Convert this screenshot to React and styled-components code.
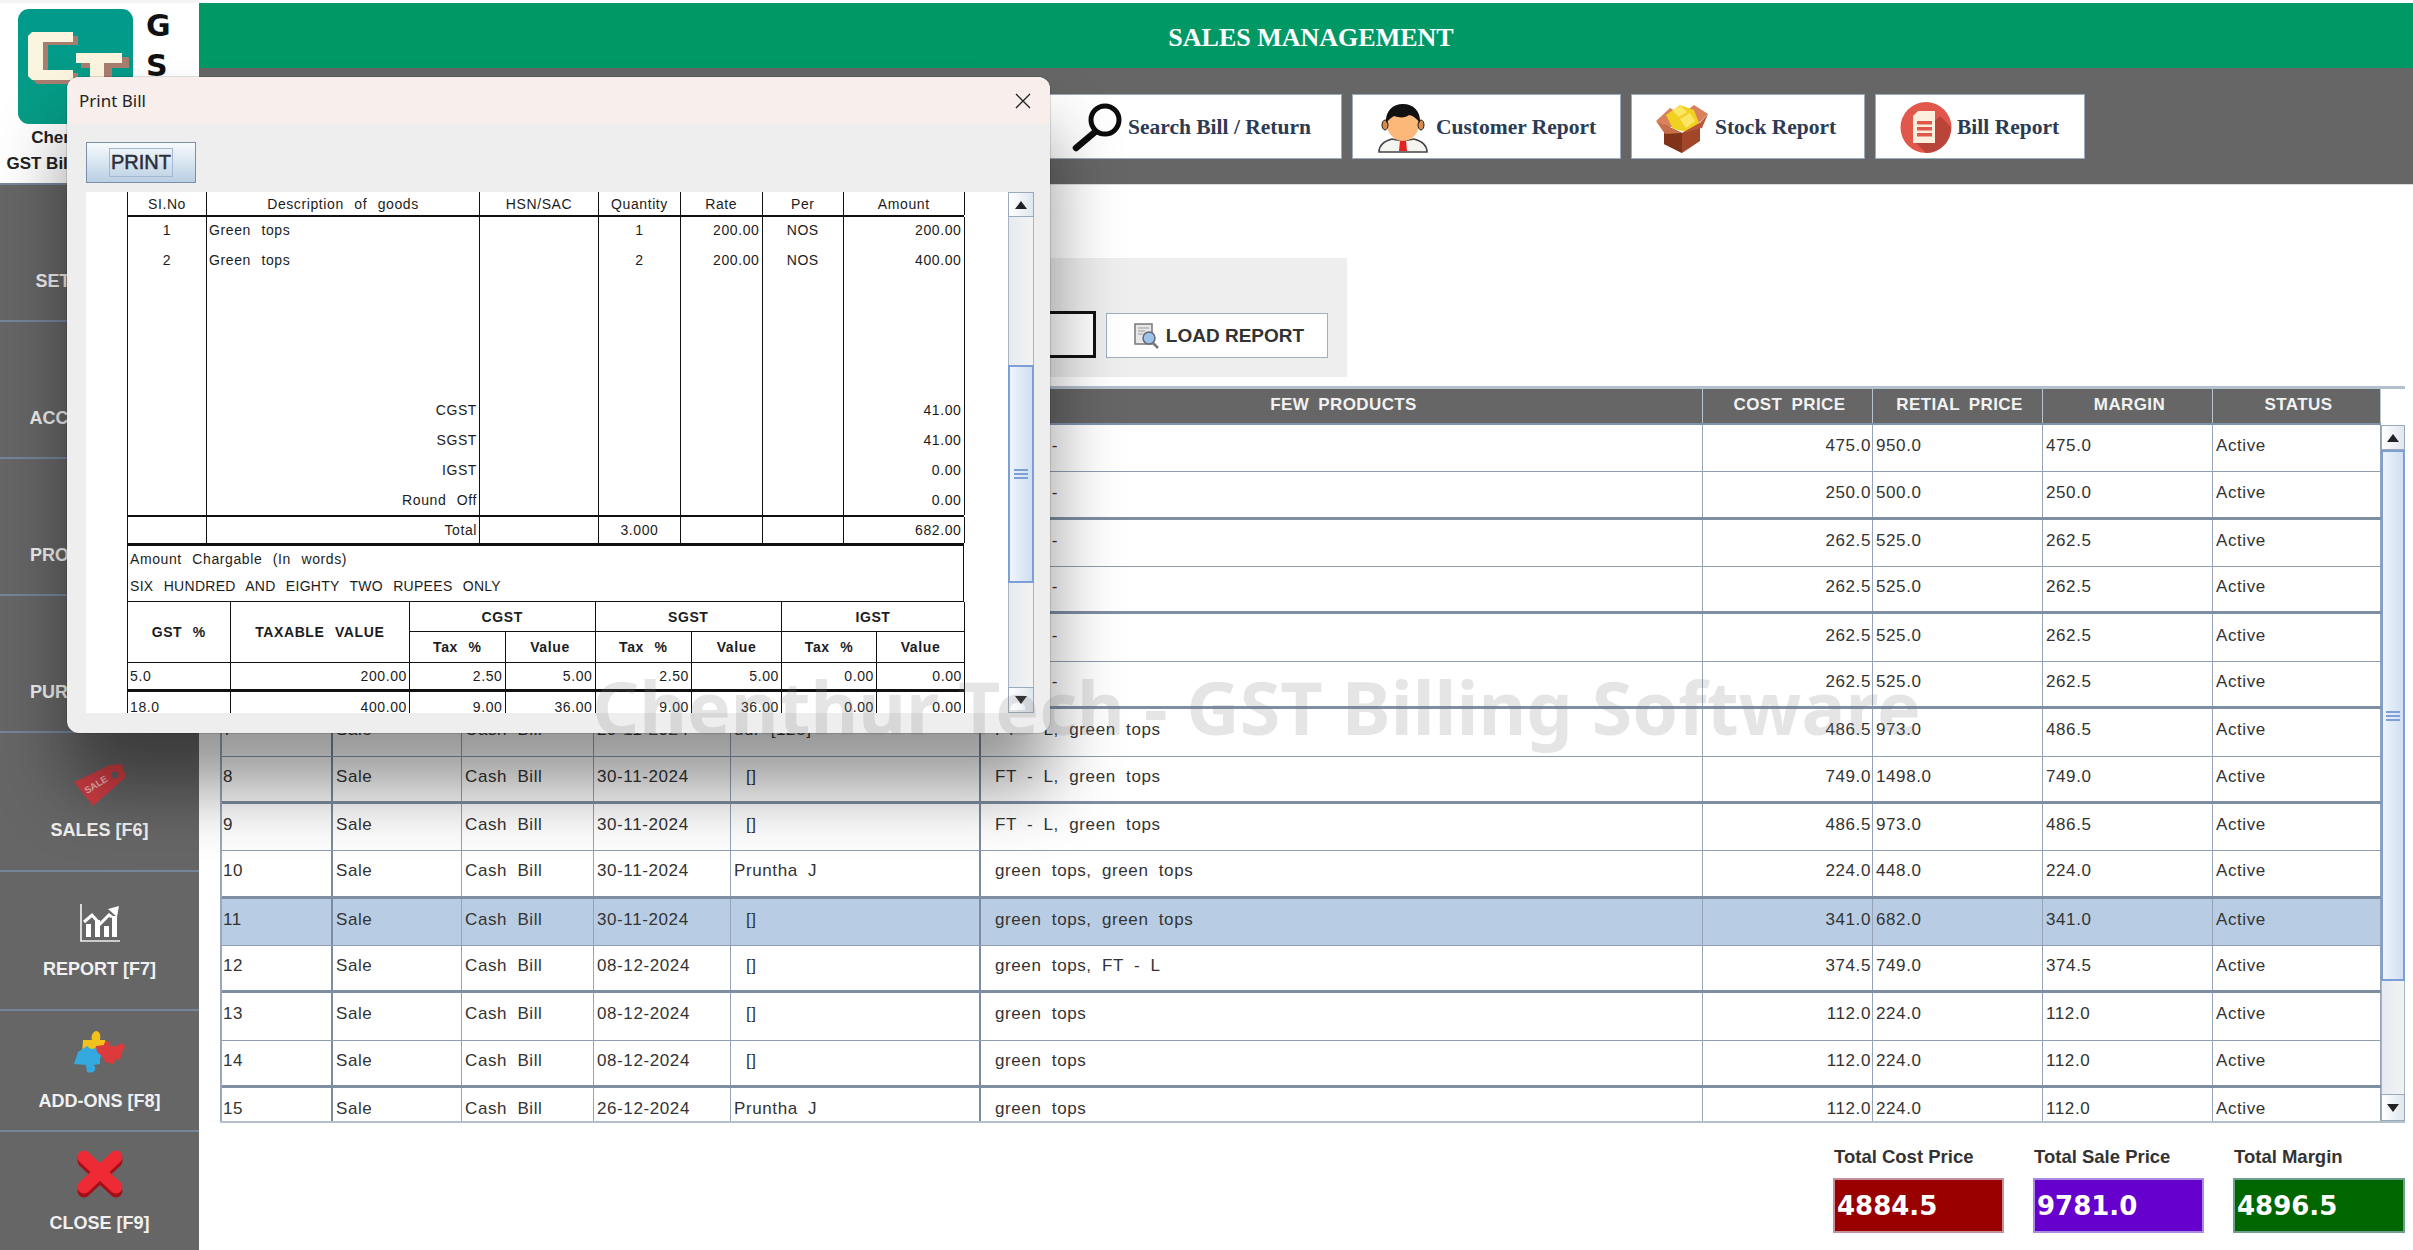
import React from "react";
import styled, { createGlobalStyle } from "styled-components";

const Global = createGlobalStyle`
  html, body { margin: 0; padding: 0; background: #fff; }
  #root { width: 2413px; height: 1250px; }
  * { box-sizing: border-box; }
`;

const Page = styled.div`
  position: relative;
  width: 2413px;
  height: 1250px;
  overflow: hidden;
  display: flex;
  background: #fff;
  font-family: "Liberation Sans", Arial, sans-serif;
`;

/* ---------- left column ---------- */
const Side = styled.aside`
  width: 199px;
  flex: none;
  display: flex;
  flex-direction: column;
`;
const Brand = styled.div`
  height: 183px;
  padding-top: 9px;
  background: #fff;
  border-top: 3px solid #f4f4f4;
`;
const BrandTop = styled.div`
  display: flex;
  padding-left: 18px;
  gap: 13px;
  height: 115px;
  margin-top: -3px;
`;
const Letters = styled.div`
  display: flex;
  flex-direction: column;
  margin-top: -3px;
  font: 700 30px/40px "DejaVu Sans", sans-serif;
  color: #111;
  width: 30px;
`;
const BrandName = styled.div`
  text-align: center;
  font-weight: 700;
  font-size: 17px;
  line-height: 26px;
  color: #222;
  padding: 1px 18px 0 0;
  white-space: nowrap;
`;
const Nav = styled.nav`
  flex: 1;
  display: flex;
  flex-direction: column;
  background: #666;
`;
const NavItem = styled.div`
  height: ${(p) => p.$h}px;
  flex: none;
  display: flex;
  flex-direction: column;
  align-items: center;
  justify-content: center;
  gap: 14px;
  border-top: 2px solid #75869b;
  color: #f1f1f1;
  font-weight: 700;
  font-size: 18px;
  line-height: 20px;
  white-space: nowrap;
`;
const NavIcon = styled.div`
  height: ${(p) => p.$h || 42}px;
  display: flex;
  align-items: center;
`;

/* ---------- right column ---------- */
const Main = styled.main`
  flex: 1;
  min-width: 0;
  display: flex;
  flex-direction: column;
`;
const TitleBar = styled.header`
  height: 65px;
  margin-top: 3px;
  padding-left: 10px;
  background: #009966;
  color: #fff;
  font: 700 26px/70px "Liberation Serif", serif;
  text-align: center;
`;
const Toolbar = styled.div`
  height: 117px;
  flex: none;
  background: #666;
  border-bottom: 1px solid #dcdcdc;
  display: flex;
  gap: 10px;
  padding: 26px 0 0 847px;
  align-items: flex-start;
`;
const ToolButton = styled.div`
  width: ${(p) => p.$w}px;
  height: 65px;
  background: #fff;
  border: 1.5px solid #9aabc0;
  display: flex;
  align-items: center;
  padding: 2px 0 0 ${(p) => p.$pad}px;
  gap: ${(p) => p.$gap}px;
  font: 700 21.5px "Liberation Serif", serif;
  color: #2c3b52;
  white-space: nowrap;
`;
const Content = styled.div`
  padding: 73px 8px 0 21px;
  display: flex;
  flex-direction: column;
`;
const FilterPanel = styled.div`
  width: 1127px;
  height: 119px;
  background: #eee;
  display: flex;
  justify-content: flex-end;
  align-items: flex-end;
  gap: 10px;
  padding: 0 19px 19px 0;
`;
const DateField = styled.div`
  width: 300px;
  height: 47px;
  background: #fff;
  border: 3px solid #111;
`;
const LoadButton = styled.div`
  width: 222px;
  height: 45px;
  background: #fff;
  border: 1.5px solid #a0afc2;
  display: flex;
  align-items: center;
  justify-content: center;
  gap: 6px;
  padding: 1px 0 0 4px;
  font-weight: 700;
  font-size: 19px;
  color: #333;
  white-space: nowrap;
`;

const COLS = "113px 129px 132px 137px 250px 722px 170px 170px 170px 168px";

const ReportTable = styled.section`
  margin-top: 9px;
  width: 2185px;
  border-top: 3px solid #b3bfce;
`;
const HeadRow = styled.div`
  display: grid;
  grid-template-columns: ${COLS};
  width: 2161px;
  height: 36px;
  background: #666;
  border-bottom: 2px solid #7f93ad;
`;
const HeadCell = styled.div`
  text-align: center;
  color: #f2f2f2;
  font-weight: 700;
  font-size: 17px;
  line-height: 32px;
  letter-spacing: 0.4px;
  word-spacing: 4px;
  padding-left: 4px;
  border-right: 1px solid #b8c1cc;
  white-space: nowrap;
`;
const BodyArea = styled.div`
  display: flex;
  height: 698px;
  border-bottom: 2px solid #b5c0ce;
`;
const Rows = styled.div`
  width: 2161px;
  flex: none;
  overflow: hidden;
  border-left: 2px solid #9aa8ba;
`;
const Row = styled.div`
  display: grid;
  grid-template-columns: ${COLS};
  margin-left: -2px;
  height: 47.36px;
  background: ${(p) => (p.$selected ? "#b8cde4" : "transparent")};
  border-bottom: ${(p) => (p.$thick ? "3px solid #7e8ea3" : "1.5px solid #8f9db1")};
`;
const Cell = styled.div`
  border-right: ${(p) => (p.$strong ? "2px solid #7c8b9f" : "1.5px solid #96a3b5")};
  padding: 0 ${(p) => (p.$right ? 1 : 3)}px 4px ${(p) => p.$indent || 3}px;
  font-size: 17px;
  letter-spacing: 0.6px;
  word-spacing: 5px;
  color: #333;
  white-space: nowrap;
  display: flex;
  align-items: center;
  justify-content: ${(p) => (p.$right ? "flex-end" : "flex-start")};
`;

/* ---------- scrollbars ---------- */
const ScrollBar = styled.div`
  width: ${(p) => p.$w}px;
  flex: none;
  display: flex;
  flex-direction: column;
  background: #eee;
`;
const ScrollButton = styled.div`
  height: ${(p) => p.$h}px;
  flex: none;
  display: flex;
  align-items: center;
  justify-content: center;
  background: linear-gradient(90deg, #ffffff, #dfe6ee);
  border: 1.5px solid #9aa9bb;
`;
const Arrow = styled.span`
  width: 0;
  height: 0;
  border-left: 6px solid transparent;
  border-right: 6px solid transparent;
  ${(p) => (p.$down ? "border-top: 8px solid #222;" : "border-bottom: 8px solid #222;")}
`;
const ScrollTrack = styled.div`
  flex: 1;
  min-height: 0;
  padding-top: ${(p) => p.$before}px;
  border-left: 1px solid #a8b4c4;
  border-right: 1px solid #a8b4c4;
  background: linear-gradient(90deg, #e6ebf0, #f2f2f2);
`;
const ScrollThumb = styled.div`
  height: ${(p) => p.$h}px;
  margin: 0 -1px;
  background: linear-gradient(90deg, #eef4fb, #cfdff2);
  border: 2px solid #7c9fd6;
  display: flex;
  flex-direction: column;
  justify-content: center;
  align-items: center;
  gap: 2px;
`;
const Grip = styled.i`
  display: block;
  width: 14px;
  height: 2px;
  background: #7c9fd6;
`;

/* ---------- totals ---------- */
const Totals = styled.div`
  display: flex;
  justify-content: flex-end;
  gap: 29px;
  margin-top: 23px;
`;
const TotalBlock = styled.div`
  width: ${(p) => p.$w || 171}px;
  display: flex;
  flex-direction: column;
`;
const TotalLabel = styled.div`
  font-weight: 700;
  font-size: 18.5px;
  line-height: 22px;
  color: #333;
  padding-left: 1px;
  white-space: nowrap;
`;
const TotalValue = styled.div`
  margin-top: 10px;
  height: 55px;
  background: ${(p) => p.$bg};
  border: 2px solid ${(p) => p.$edge};
  color: #fff;
  padding-left: 2px;
  font: 700 26px/53px "DejaVu Sans", sans-serif;
`;

/* ---------- print dialog ---------- */
const Dialog = styled.div`
  position: absolute;
  left: 67px;
  top: 77px;
  width: 983px;
  height: 656px;
  border-radius: 12px;
  background: #eee;
  box-shadow: 0 55px 70px rgba(0, 0, 0, 0.42), 0 0 0 1px rgba(0, 0, 0, 0.12);
  overflow: hidden;
  display: flex;
  flex-direction: column;
  z-index: 10;
`;
const DialogTitle = styled.div`
  height: 47px;
  flex: none;
  background: #f8efed;
  display: flex;
  align-items: center;
  justify-content: space-between;
  padding: 0 19px 0 12px;
  font: 400 17px "Noto Sans", sans-serif;
  color: #222;
`;
const DialogBody = styled.div`
  flex: 1;
  min-height: 0;
  padding: 18px 16px 20px 19px;
  display: flex;
  flex-direction: column;
  gap: 9px;
`;
const PrintButton = styled.div`
  width: 110px;
  height: 41px;
  flex: none;
  border: 1.5px solid #7a8ea8;
  background: linear-gradient(180deg, #f8fbfd, #b9cfe3);
  display: flex;
  align-items: center;
  justify-content: center;
`;
const PrintLabel = styled.span`
  border: 1px solid #a5b8cf;
  padding: 3px 1px;
  font-size: 20px;
  line-height: 21px;
  color: #2a2f3a;
  -webkit-text-stroke: 0.5px #2a2f3a;
`;
const ScrollArea = styled.div`
  flex: 1;
  min-height: 0;
  display: flex;
`;
const Sheet = styled.div`
  width: 922px;
  flex: none;
  background: #fff;
  overflow: hidden;
  padding-left: 41px;
  color: #1c1c1c;
  font-size: 14px;
  letter-spacing: 0.6px;
  word-spacing: 6px;
`;
const BILL_COLS = "79px 273px 119px 82px 81.5px 81.5px 120.5px";
const BillRow = styled.div`
  display: grid;
  grid-template-columns: ${BILL_COLS};
  width: 837px;
  height: ${(p) => p.$h}px;
  border-left: 1.5px solid #111;
  border-bottom: ${(p) => p.$rule || 0}px solid #111;
`;
const BillCell = styled.div`
  border-right: 1.5px solid #111;
  padding: 0 2px;
  display: flex;
  align-items: center;
  white-space: nowrap;
  justify-content: ${(p) => p.$align || "flex-start"};
`;
const Words = styled.div`
  width: 837px;
  height: 56px;
  border-left: 1.5px solid #111;
  border-right: 1.5px solid #111;
  border-bottom: 1.5px solid #111;
  padding-left: 2px;
  line-height: 27px;
  white-space: nowrap;
`;
const CapsLine = styled.span`
  letter-spacing: 0.3px;
`;
const Summary = styled.div`
  display: grid;
  width: 837px;
  grid-template-columns: 102.5px 179.5px 95.5px 90px 96.5px 90px 95px 88px;
  grid-template-rows: 30px 31px 29px 30px;
  border-left: 1.5px solid #111;
`;
const SumCell = styled.div`
  grid-column: span ${(p) => p.$cols || 1};
  grid-row: span ${(p) => p.$rows || 1};
  border-right: 1.5px solid #111;
  border-bottom: ${(p) => p.$rule ?? 1.5}px solid #111;
  padding: 0 2px;
  display: flex;
  align-items: center;
  white-space: nowrap;
  font-weight: ${(p) => (p.$bold ? 700 : 400)};
  justify-content: ${(p) => p.$align || "flex-end"};
`;

const Watermark = styled.div`
  position: absolute;
  left: 592px;
  top: 657px;
  z-index: 20;
  pointer-events: none;
  font: 700 73.5px/100px "Noto Sans", sans-serif;
  color: rgba(125, 125, 125, 0.2);
  white-space: nowrap;
`;

/* ---------- drawings ---------- */
const Logo = () => (
  <svg width="115" height="115" viewBox="0 0 115 115">
    <defs>
      <linearGradient id="lg" x1="0" y1="0" x2="0" y2="1">
        <stop offset="0" stopColor="#009a8b" />
        <stop offset="1" stopColor="#069c84" />
      </linearGradient>
    </defs>
    <rect width="115" height="115" rx="11" fill="url(#lg)" />
    <path d="M19 27h41v9H30v28h30v11H19l-4-4V31z" fill="#a87d70" />
    <path d="M14 23h41v10H25v28h30v10H14l-4-4V27z" fill="#fbf4de" />
    <path d="M63 48h48v11H94v50H80V59H63z" fill="#a87d70" />
    <path d="M58 44h46v10H86v46H72V54H58z" fill="#fbf4de" />
  </svg>
);
const SearchIcon = () => (
  <svg width="52" height="50" viewBox="0 0 52 50">
    <circle cx="34" cy="17" r="14" fill="none" stroke="#0c0c0c" strokeWidth="5" />
    <path d="M24 29 L5 45" stroke="#0c0c0c" strokeWidth="6.5" strokeLinecap="round" />
  </svg>
);
const CustomerIcon = () => (
  <svg width="50" height="50" viewBox="0 0 50 50">
    <path d="M1 49c0-7 5-11 13-13l11 2 11-2c8 2 13 6 13 13z" fill="#f4f4f0" stroke="#444" strokeWidth="1.5" />
    <path d="M22 37h6l1 11h-8z" fill="#e2231f" />
    <ellipse cx="25" cy="21" rx="16" ry="17" fill="#fbb878" />
    <ellipse cx="7" cy="22" rx="3" ry="5" fill="#d88a48" stroke="#222" strokeWidth="1" />
    <ellipse cx="43" cy="22" rx="3" ry="5" fill="#d88a48" stroke="#222" strokeWidth="1" />
    <path d="M8 20C7 8 15 1 25 1s18 7 17 19c-3-4-6-7-11-8-3 3-10 3-15 1-3 2-6 4-8 7z" fill="#111" />
  </svg>
);
const StockIcon = () => (
  <svg width="52" height="50" viewBox="0 0 52 50">
    <path d="M0 18 14 5l12 6 12-9 14 9-12 12-14-2-14 4z" fill="#d9805c" />
    <path d="M10 12 24 2l14 5 5 13-12 9-14-3z" fill="#f2d022" />
    <path d="M16 7l9-4 6 6-8 5zM24 16l10-6 5 8-9 7z" fill="#fbe765" />
    <path d="M8 22 26 30l18-10v18L26 50 8 41z" fill="#a2462a" />
    <path d="M26 30v20L8 41V22z" fill="#7f3318" />
    <path d="M8 22 0 18l9 13 17-1z" fill="#c96d4a" />
    <path d="M44 20l8-9-6 14-20 5z" fill="#b9573a" />
  </svg>
);
const BillIcon = () => (
  <svg width="52" height="51" viewBox="0 0 52 51">
    <circle cx="26" cy="25.5" r="25.5" fill="#e2574c" />
    <path d="M14 39 40 14l11 11c0 14-11 26-25 26z" fill="#b9443a" />
    <path d="M18 9h17v32H13V14z" fill="#fbeedd" />
    <path d="M17 19h15v3.5H17zM17 25h15v3.5H17zM17 31h15v3.5H17z" fill="#e2574c" />
  </svg>
);
const ReportIcon = () => (
  <svg width="26" height="26" viewBox="0 0 26 26">
    <path d="M1 1h17v20H1z" fill="#e8e8e8" stroke="#777" strokeWidth="1.5" />
    <path d="M4 5h11M4 8h7M4 11h5" stroke="#999" strokeWidth="1.2" />
    <circle cx="15" cy="15" r="6" fill="#9cc3e8" stroke="#667" strokeWidth="1.5" />
    <path d="M19 20l5 5" stroke="#777" strokeWidth="2.5" />
  </svg>
);
const SaleIcon = () => (
  <svg width="52" height="42" viewBox="0 0 52 42">
    <path d="M0 18 36 1l12-1 4 13-33 29z" fill="#d43f46" />
    <circle cx="41" cy="11" r="3.4" fill="#666" />
    <text x="0" y="0" transform="translate(13 30) rotate(-32)" fontFamily="Liberation Sans, sans-serif" fontWeight="700" fontSize="9.5" fill="#f4b6b8">SALE</text>
  </svg>
);
const ChartIcon = () => (
  <svg width="40" height="39" viewBox="0 0 40 39">
    <path d="M1 0v37h39" fill="none" stroke="#eee" strokeWidth="1.7" />
    <path d="M6 33V20h5v13zM15 33V16h5v17zM24 33V22h5v11zM32 33V12h5v21z" fill="#fff" />
    <path d="M4 18l8-7 8 9 9-9 3 2" fill="none" stroke="#fff" strokeWidth="3" />
    <path d="M28 5l11-3-2 11z" fill="#fff" />
  </svg>
);
const PuzzleIcon = () => (
  <svg width="52" height="46" viewBox="0 0 52 46">
    <path d="M9 9h9c-1-3 0-8 4-9 4 0 5 5 4 9h5l1 8-5 1v5H8z" fill="#f1c21b" />
    <path d="M4 21l9-6c1 0 2 3 5 3s4-2 4-3l7 8-3 4v6l-7 1c1 0 3 2 2 5-1 3-6 3-8 2l-1-7-12-1z" fill="#33a9df" />
    <path d="M22 15l8-1c0-3 3-5 5-3s1 3 1 4h8c0-2 3-3 5-2s2 4 1 6l-2 2-2 8-4-1-3 5-8-2-1-4-7-6z" fill="#dd3a3b" />
  </svg>
);
const CloseIcon = () => (
  <svg width="48" height="50" viewBox="0 0 48 50">
    <g strokeWidth="13" strokeLinecap="round">
      <path d="M8 12 40 42M40 12 8 42" stroke="#a50f17" />
      <path d="M8 8 40 38M40 8 8 38" stroke="#ee2a35" />
    </g>
  </svg>
);
const CloseGlyph = () => (
  <svg width="16" height="16" viewBox="0 0 16 16">
    <path d="M1 1 15 15M15 1 1 15" stroke="#222" strokeWidth="1.3" />
  </svg>
);

/* ---------- data ---------- */
const STRONG = [0, 4];
const d1 = "30-11-2024";
const d2 = "08-12-2024";
const row = (n, date, cust, prod, c, r, m, indent) => ({ n, date, cust, prod, c, r, m, indent });
const ROWS = [
  row(1, "29-11-2024", "", "green -", "475.0", "950.0", "475.0"),
  row(2, "29-11-2024", "", "green -", "250.0", "500.0", "250.0"),
  row(3, "29-11-2024", "", "green -", "262.5", "525.0", "262.5"),
  row(4, "29-11-2024", "", "green -", "262.5", "525.0", "262.5"),
  row(5, "29-11-2024", "", "green -", "262.5", "525.0", "262.5"),
  row(6, "29-11-2024", "", "green -", "262.5", "525.0", "262.5"),
  row(7, "29-11-2024", "dur [123]", "FT - L, green tops", "486.5", "973.0", "486.5"),
  row(8, d1, "[]", "FT - L, green tops", "749.0", "1498.0", "749.0", 15),
  row(9, d1, "[]", "FT - L, green tops", "486.5", "973.0", "486.5", 15),
  row(10, d1, "Pruntha J", "green tops, green tops", "224.0", "448.0", "224.0"),
  row(11, d1, "[]", "green tops, green tops", "341.0", "682.0", "341.0", 15),
  row(12, d2, "[]", "green tops, FT - L", "374.5", "749.0", "374.5", 15),
  row(13, d2, "[]", "green tops", "112.0", "224.0", "112.0", 15),
  row(14, d2, "[]", "green tops", "112.0", "224.0", "112.0", 15),
  row(15, "26-12-2024", "Pruntha J", "green tops", "112.0", "224.0", "112.0"),
];
const HEADS = ["S.NO", "TYPE", "BILL TYPE", "DATE", "CUSTOMER", "FEW PRODUCTS", "COST PRICE", "RETIAL PRICE", "MARGIN", "STATUS"];

const END = "flex-end";
const MID = "center";
const BILL = [
  { h: 26, c: [["1", MID], ["Green tops"], [""], ["1", MID], ["200.00", END], ["NOS", MID], ["200.00", END]] },
  { h: 34, c: [["2", MID], ["Green tops"], [""], ["2", MID], ["200.00", END], ["NOS", MID], ["400.00", END]] },
  { h: 118, c: [[""], [""], [""], [""], [""], [""], [""]] },
  { h: 30, c: [[""], ["CGST", END], [""], [""], [""], [""], ["41.00", END]] },
  { h: 30, c: [[""], ["SGST", END], [""], [""], [""], [""], ["41.00", END]] },
  { h: 30, c: [[""], ["IGST", END], [""], [""], [""], [""], ["0.00", END]] },
  { h: 32, rule: 2, c: [[""], ["Round Off", END], [""], [""], [""], [""], ["0.00", END]] },
  { h: 29, rule: 3, c: [[""], ["Total", END], [""], ["3.000", MID], [""], [""], ["682.00", END]] },
];

const Scroller = ({ w, up, down, before, thumb }) => (
  <ScrollBar $w={w}>
    <ScrollButton $h={up}><Arrow /></ScrollButton>
    <ScrollTrack $before={before}>
      <ScrollThumb $h={thumb}><Grip /><Grip /><Grip /></ScrollThumb>
    </ScrollTrack>
    <ScrollButton $h={down}><Arrow $down /></ScrollButton>
  </ScrollBar>
);

const NAV = [
  { h: 137, label: "SETTINGS [F2]" },
  { h: 137, label: "ACCOUNTS [F3]" },
  { h: 137, label: "PRODUCTS [F4]" },
  { h: 137, label: "PURCHASE [F5]" },
  { h: 139, label: "SALES [F6]", icon: <SaleIcon /> },
  { h: 139, label: "REPORT [F7]", icon: <ChartIcon /> },
  { h: 121, label: "ADD-ONS [F8]", icon: <PuzzleIcon />, ih: 46 },
  { h: 120, label: "CLOSE [F9]", icon: <CloseIcon />, ih: 50 },
];

export default function App() {
  return (
    <Page>
      <Global />
      <Side>
        <Brand>
          <BrandTop>
            <Logo />
            <Letters><span>G</span><span>S</span><span>T</span></Letters>
          </BrandTop>
          <BrandName>Chenthur Tech<br />GST Billing Software</BrandName>
        </Brand>
        <Nav>
          {NAV.map((n) => (
            <NavItem key={n.label} $h={n.h}>
              <NavIcon $h={n.ih}>{n.icon}</NavIcon>
              {n.label}
            </NavItem>
          ))}
        </Nav>
      </Side>

      <Main>
        <TitleBar>SALES MANAGEMENT</TitleBar>
        <Toolbar>
          <ToolButton $w={296} $pad={24} $gap={5}><SearchIcon />Search Bill / Return</ToolButton>
          <ToolButton $w={269} $pad={25} $gap={8}><CustomerIcon />Customer Report</ToolButton>
          <ToolButton $w={234} $pad={24} $gap={7}><StockIcon />Stock Report</ToolButton>
          <ToolButton $w={210} $pad={24} $gap={5}><BillIcon />Bill Report</ToolButton>
        </Toolbar>
        <Content>
          <FilterPanel>
            <DateField />
            <LoadButton><ReportIcon />LOAD REPORT</LoadButton>
          </FilterPanel>
          <ReportTable>
            <HeadRow>
              {HEADS.map((h) => <HeadCell key={h}>{h}</HeadCell>)}
            </HeadRow>
            <BodyArea>
              <Rows>
                {ROWS.map((r) => {
                  const cells = [
                    [String(r.n)], ["Sale"], ["Cash Bill"], [r.date], [r.cust, false, r.indent],
                    [r.prod, false, 14], [r.c, true], [r.r], [r.m], ["Active"],
                  ];
                  return (
                    <Row key={r.n} $thick={r.n % 2 === 0} $selected={r.n === 11}>
                      {cells.map(([t, right, indent], i) => (
                        <Cell key={i} $right={right} $indent={indent} $strong={STRONG.includes(i)}>{t}</Cell>
                      ))}
                    </Row>
                  );
                })}
              </Rows>
              <Scroller w={24} up={25} down={27} before={0} thumb={531} />
            </BodyArea>
          </ReportTable>
          <Totals>
            <TotalBlock>
              <TotalLabel>Total Cost Price</TotalLabel>
              <TotalValue $bg="#990000" $edge="#c58f9b">4884.5</TotalValue>
            </TotalBlock>
            <TotalBlock>
              <TotalLabel>Total Sale Price</TotalLabel>
              <TotalValue $bg="#6600cc" $edge="#a98be0">9781.0</TotalValue>
            </TotalBlock>
            <TotalBlock $w={172}>
              <TotalLabel>Total Margin</TotalLabel>
              <TotalValue $bg="#006600" $edge="#6f9f8f">4896.5</TotalValue>
            </TotalBlock>
          </Totals>
        </Content>
      </Main>

      <Dialog>
        <DialogTitle>Print Bill<CloseGlyph /></DialogTitle>
        <DialogBody>
          <PrintButton><PrintLabel>PRINT</PrintLabel></PrintButton>
          <ScrollArea>
            <Sheet>
              <BillRow $h={25} $rule={2}>
                <BillCell $align={MID}>SI.No</BillCell>
                <BillCell $align={MID}>Description of goods</BillCell>
                <BillCell $align={MID}>HSN/SAC</BillCell>
                <BillCell $align={MID}>Quantity</BillCell>
                <BillCell $align={MID}>Rate</BillCell>
                <BillCell $align={MID}>Per</BillCell>
                <BillCell $align={MID}>Amount</BillCell>
              </BillRow>
              {BILL.map((r, i) => (
                <BillRow key={i} $h={r.h} $rule={r.rule}>
                  {r.c.map(([t, a], j) => <BillCell key={j} $align={a}>{t}</BillCell>)}
                </BillRow>
              ))}
              <Words>Amount Chargable (In words)<br /><CapsLine>SIX HUNDRED AND EIGHTY TWO RUPEES ONLY</CapsLine></Words>
              <Summary>
                <SumCell $rows={2} $bold $align={MID}>GST %</SumCell>
                <SumCell $rows={2} $bold $align={MID}>TAXABLE VALUE</SumCell>
                <SumCell $cols={2} $bold $align={MID}>CGST</SumCell>
                <SumCell $cols={2} $bold $align={MID}>SGST</SumCell>
                <SumCell $cols={2} $bold $align={MID}>IGST</SumCell>
                <SumCell $bold $align={MID}>Tax %</SumCell>
                <SumCell $bold $align={MID}>Value</SumCell>
                <SumCell $bold $align={MID}>Tax %</SumCell>
                <SumCell $bold $align={MID}>Value</SumCell>
                <SumCell $bold $align={MID}>Tax %</SumCell>
                <SumCell $bold $align={MID}>Value</SumCell>
                {["5.0", "200.00", "2.50", "5.00", "2.50", "5.00", "0.00", "0.00"].map((t, i) => (
                  <SumCell key={i} $rule={3} $align={i === 0 ? "flex-start" : END}>{t}</SumCell>
                ))}
                {["18.0", "400.00", "9.00", "36.00", "9.00", "36.00", "0.00", "0.00"].map((t, i) => (
                  <SumCell key={i} $rule={0} $align={i === 0 ? "flex-start" : END}>{t}</SumCell>
                ))}
              </Summary>
            </Sheet>
            <Scroller w={26} up={25} down={26} before={148} thumb={218} />
          </ScrollArea>
        </DialogBody>
      </Dialog>

      <Watermark>Chenthur Tech - GST Billing Software</Watermark>
    </Page>
  );
}
